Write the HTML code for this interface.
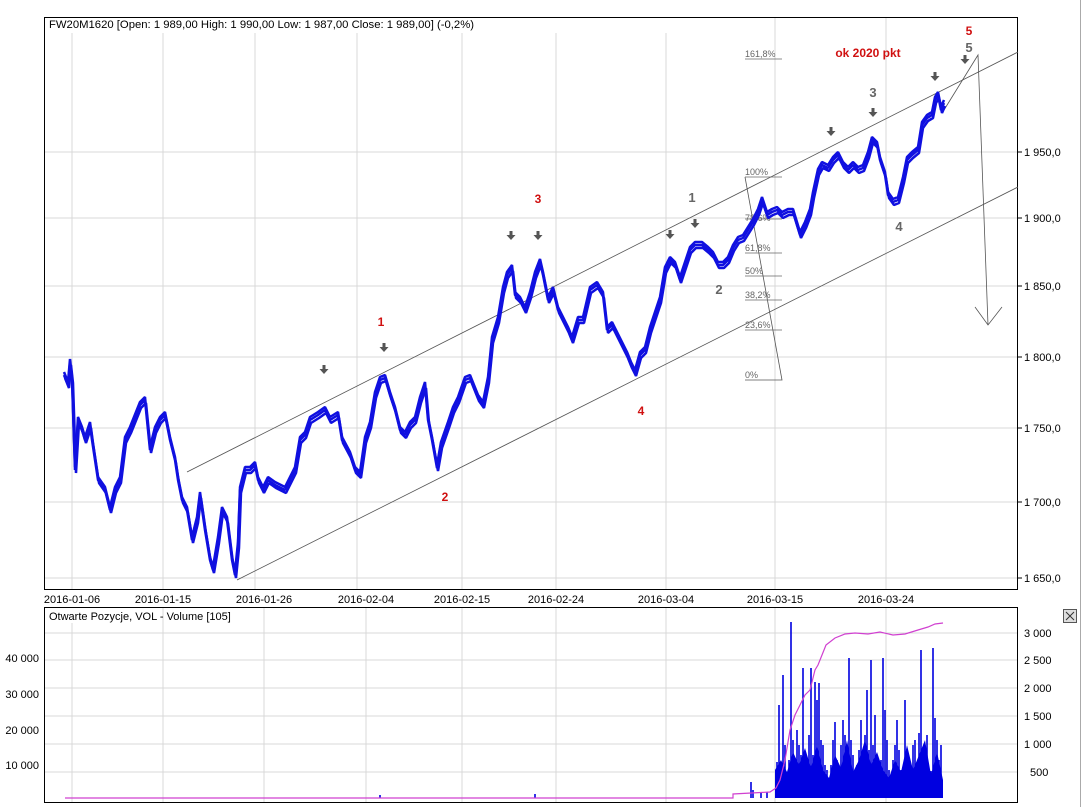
<!DOCTYPE html>
<html><head><meta charset="utf-8"><style>
html,body{margin:0;padding:0;background:#fff;width:1084px;height:807px;overflow:hidden}
svg{display:block;font-family:"Liberation Sans",Arial,sans-serif}
</style></head><body>
<svg width="1084" height="807" viewBox="0 0 1084 807" xmlns="http://www.w3.org/2000/svg">
<rect width="1084" height="807" fill="#fff"/>
<line x1="1080.5" y1="0" x2="1080.5" y2="807" stroke="#aaa"/>
<g stroke="#d8d8d8" stroke-width="1">
<line x1="72" y1="33" x2="72" y2="590"/><line x1="163" y1="33" x2="163" y2="590"/><line x1="255" y1="33" x2="255" y2="590"/><line x1="357" y1="33" x2="357" y2="590"/><line x1="462" y1="33" x2="462" y2="590"/><line x1="556" y1="33" x2="556" y2="590"/><line x1="666" y1="33" x2="666" y2="590"/><line x1="775" y1="17" x2="775" y2="590"/><line x1="886" y1="17" x2="886" y2="590"/>
<line x1="44" y1="152" x2="1018" y2="152"/><line x1="44" y1="218" x2="1018" y2="218"/><line x1="44" y1="286" x2="1018" y2="286"/><line x1="44" y1="357" x2="1018" y2="357"/><line x1="44" y1="428" x2="1018" y2="428"/><line x1="44" y1="502" x2="1018" y2="502"/><line x1="44" y1="578" x2="1018" y2="578"/>
</g>
<rect x="44.5" y="17.5" width="973" height="572" fill="none" stroke="#000"/>
<text x="49" y="28" font-size="11" textLength="425" lengthAdjust="spacingAndGlyphs">FW20M1620 [Open: 1 989,00  High: 1 990,00  Low: 1 987,00  Close: 1 989,00] (-0,2%)</text>
<g font-size="11" fill="#000">
<text x="1024" y="156">1 950,0</text><text x="1024" y="222">1 900,0</text><text x="1024" y="290">1 850,0</text><text x="1024" y="361">1 800,0</text><text x="1024" y="432">1 750,0</text><text x="1024" y="506">1 700,0</text><text x="1024" y="582">1 650,0</text>
<g stroke="#000"><line x1="1018" y1="152" x2="1022" y2="152"/><line x1="1018" y1="218" x2="1022" y2="218"/><line x1="1018" y1="286" x2="1022" y2="286"/><line x1="1018" y1="357" x2="1022" y2="357"/><line x1="1018" y1="428" x2="1022" y2="428"/><line x1="1018" y1="502" x2="1022" y2="502"/><line x1="1018" y1="578" x2="1022" y2="578"/></g>
<text x="72" y="603" text-anchor="middle">2016-01-06</text><text x="163" y="603" text-anchor="middle">2016-01-15</text><text x="264" y="603" text-anchor="middle">2016-01-26</text><text x="366" y="603" text-anchor="middle">2016-02-04</text><text x="462" y="603" text-anchor="middle">2016-02-15</text><text x="556" y="603" text-anchor="middle">2016-02-24</text><text x="666" y="603" text-anchor="middle">2016-03-04</text><text x="775" y="603" text-anchor="middle">2016-03-15</text><text x="886" y="603" text-anchor="middle">2016-03-24</text>
</g>
<g stroke="#555" stroke-width="0.8" fill="none">
<line x1="187" y1="472" x2="1018" y2="52"/>
<line x1="237" y1="580" x2="1018" y2="187"/>
<polyline points="944,110 978,55 988,325"/>
<polyline points="975,307 988,325 1002,307"/>
<polyline points="745,177 782,380 745,380"/>
<g stroke="#666"><line x1="745" y1="59" x2="782" y2="59"/><line x1="745" y1="177" x2="782" y2="177"/><line x1="745" y1="219" x2="782" y2="219"/><line x1="745" y1="253" x2="782" y2="253"/><line x1="745" y1="276" x2="782" y2="276"/><line x1="745" y1="300" x2="782" y2="300"/><line x1="745" y1="330" x2="782" y2="330"/></g>
</g>
<g font-size="9" fill="#666">
<text x="745" y="57">161,8%</text><text x="745" y="175">100%</text><text x="745" y="221">78,6%</text><text x="745" y="251">61,8%</text><text x="745" y="274">50%</text><text x="745" y="298">38,2%</text><text x="745" y="328">23,6%</text><text x="745" y="378">0%</text>
</g>
<g fill="none" stroke="#1010e0" stroke-linejoin="bevel">
<polyline id="pl" stroke-width="2.5" points="64,375 68,385 70,362 72,380 75,470 78,420 82,430 85,440 90,425 92,440 98,480 105,490 110,510 115,490 120,480 125,440 130,430 136,415 140,405 145,400 150,450 155,430 160,420 165,415 170,440 175,460 178,480 182,500 187,510 192,540 197,520 200,495 205,530 210,560 213,570 218,540 222,510 227,520 232,560 235,575 238,545 240,490 245,470 250,470 255,465 258,480 263,490 268,480 275,485 285,490 295,470 300,440 305,435 310,420 318,415 325,410 330,420 338,415 342,440 350,455 355,470 360,475 365,440 370,425 375,395 380,380 385,378 390,395 395,410 400,430 405,435 410,425 415,420 420,400 425,385 428,420 432,440 437,468 441,445 448,425 453,410 458,400 465,380 470,378 478,398 483,405 488,380 492,340 498,320 503,290 507,275 512,268 515,295 520,300 525,310 530,295 535,275 540,262 543,275 548,300 553,290 558,310 563,320 568,330 572,340 578,320 583,320 590,290 597,285 603,295 607,330 612,325 617,335 622,345 627,355 631,365 635,373 640,355 645,350 650,330 655,315 660,300 665,270 670,260 675,265 680,280 685,265 690,250 695,245 702,245 708,250 713,255 718,265 723,265 728,260 733,248 738,240 743,238 748,230 753,222 758,212 762,200 767,215 772,212 777,210 782,215 788,212 793,212 800,235 805,225 810,212 813,195 818,172 822,165 828,168 833,160 838,155 843,165 848,170 853,165 858,170 863,168 868,155 872,140 877,145 880,160 885,175 888,195 893,202 898,200 903,180 907,160 912,155 918,150 922,125 927,118 932,115 935,100 938,95 941,110 944,103"/>
<use href="#pl" transform="translate(1,3)" stroke-width="2"/>
<use href="#pl" transform="translate(0,-3)" stroke-width="1.5"/>
</g>
<g font-size="12" font-weight="bold" fill="#d01010" text-anchor="middle">
<text x="381" y="326">1</text><text x="445" y="501">2</text><text x="538" y="203">3</text><text x="641" y="415">4</text><text x="969" y="35">5</text>
<text x="868" y="57">ok 2020 pkt</text>
</g>
<g font-size="13" font-weight="bold" fill="#666" text-anchor="middle">
<text x="692" y="202">1</text><text x="719" y="294">2</text><text x="873" y="97">3</text><text x="899" y="231">4</text><text x="969" y="52">5</text>
</g>
<g fill="#555">
<path d="M-1.5,-6h3v4h3l-4.5,5l-4.5,-5h3z" transform="translate(324,371)"/>
<path d="M-1.5,-6h3v4h3l-4.5,5l-4.5,-5h3z" transform="translate(384,349)"/>
<path d="M-1.5,-6h3v4h3l-4.5,5l-4.5,-5h3z" transform="translate(511,237)"/>
<path d="M-1.5,-6h3v4h3l-4.5,5l-4.5,-5h3z" transform="translate(538,237)"/>
<path d="M-1.5,-6h3v4h3l-4.5,5l-4.5,-5h3z" transform="translate(670,236)"/>
<path d="M-1.5,-6h3v4h3l-4.5,5l-4.5,-5h3z" transform="translate(695,225)"/>
<path d="M-1.5,-6h3v4h3l-4.5,5l-4.5,-5h3z" transform="translate(831,133)"/>
<path d="M-1.5,-6h3v4h3l-4.5,5l-4.5,-5h3z" transform="translate(873,114)"/>
<path d="M-1.5,-6h3v4h3l-4.5,5l-4.5,-5h3z" transform="translate(935,78)"/>
<path d="M-1.5,-6h3v4h3l-4.5,5l-4.5,-5h3z" transform="translate(965,61)"/>
</g>
<g stroke="#d8d8d8">
<line x1="72" y1="623" x2="72" y2="802"/><line x1="163" y1="607" x2="163" y2="802"/><line x1="264" y1="607" x2="264" y2="802"/><line x1="366" y1="607" x2="366" y2="802"/><line x1="462" y1="607" x2="462" y2="802"/><line x1="556" y1="607" x2="556" y2="802"/><line x1="666" y1="607" x2="666" y2="802"/><line x1="775" y1="607" x2="775" y2="802"/><line x1="886" y1="607" x2="886" y2="802"/>
<line x1="44" y1="633" x2="1018" y2="633"/><line x1="44" y1="660" x2="1018" y2="660"/><line x1="44" y1="688" x2="1018" y2="688"/><line x1="44" y1="716" x2="1018" y2="716"/><line x1="44" y1="744" x2="1018" y2="744"/><line x1="44" y1="772" x2="1018" y2="772"/>
</g>
<rect x="44.5" y="607.5" width="973" height="195" fill="none" stroke="#000"/>
<text x="49" y="620" font-size="11">Otwarte Pozycje, VOL - Volume [105]</text>
<g font-size="11">
<text x="39" y="662" text-anchor="end">40 000</text><text x="39" y="698" text-anchor="end">30 000</text><text x="39" y="734" text-anchor="end">20 000</text><text x="39" y="769" text-anchor="end">10 000</text>
<text x="1024" y="637">3 000</text><text x="1024" y="664">2 500</text><text x="1024" y="692">2 000</text><text x="1024" y="720">1 500</text><text x="1024" y="748">1 000</text><text x="1030" y="776">500</text>
</g>
<rect x="1063.5" y="609.5" width="13" height="13" fill="#ddd" stroke="#555"/>
<path d="M1066,612l8,8M1074,612l-8,8" stroke="#333"/>
<path fill="#0000e0" d="M775,798V770L781,760L787,772L793,752L799,765L805,748L811,768L817,745L823,770L829,778L835,755L841,768L847,740L853,772L859,760L865,740L871,765L877,752L883,770L889,778L895,760L901,772L907,745L913,770L919,755L925,740L931,775L937,752L943,780V798Z"/>
<path stroke="#0000e0" stroke-width="1.6" d="M777,798V762M779,798V705M781,798V770M783,798V675M785,798V745M787,798V775M789,798V760M791,798V622M793,798V740M795,798V762M797,798V730M799,798V745M801,798V755M803,798V668M805,798V770M807,798V760M809,798V735M811,798V668M813,798V755M815,798V682M817,798V700M819,798V683M821,798V740M823,798V745M825,798V765M827,798V770M829,798V780M831,798V765M833,798V740M835,798V722M837,798V760M839,798V770M841,798V745M843,798V720M845,798V735M847,798V760M849,798V658M851,798V740M853,798V755M855,798V770M857,798V765M859,798V750M861,798V720M863,798V775M865,798V735M867,798V690M869,798V750M871,798V660M873,798V745M875,798V715M877,798V760M879,798V770M881,798V760M883,798V658M885,798V710M887,798V740M889,798V770M891,798V780M893,798V760M895,798V745M897,798V720M899,798V750M901,798V770M903,798V780M905,798V700M907,798V780M909,798V760M911,798V780M913,798V745M915,798V740M917,798V770M919,798V733M921,798V650M923,798V760M925,798V775M927,798V735M929,798V785M931,798V771M933,798V648M935,798V718M937,798V740M939,798V760M941,798V745M751,798V782M753,798V790M761,798V793M767,798V792M535,798V794M380,798V795"/>
<polyline fill="none" stroke="#d040d0" stroke-width="1.2" points="65,798 733,798 733,794 770,792 776,788 780,780 785,760 790,730 795,715 800,705 805,695 810,690 815,670 818,665 822,655 826,645 835,638 845,634 855,633 868,634 880,632 893,635 905,634 918,630 928,627 935,624 943,623"/>
</svg>
</body></html>
